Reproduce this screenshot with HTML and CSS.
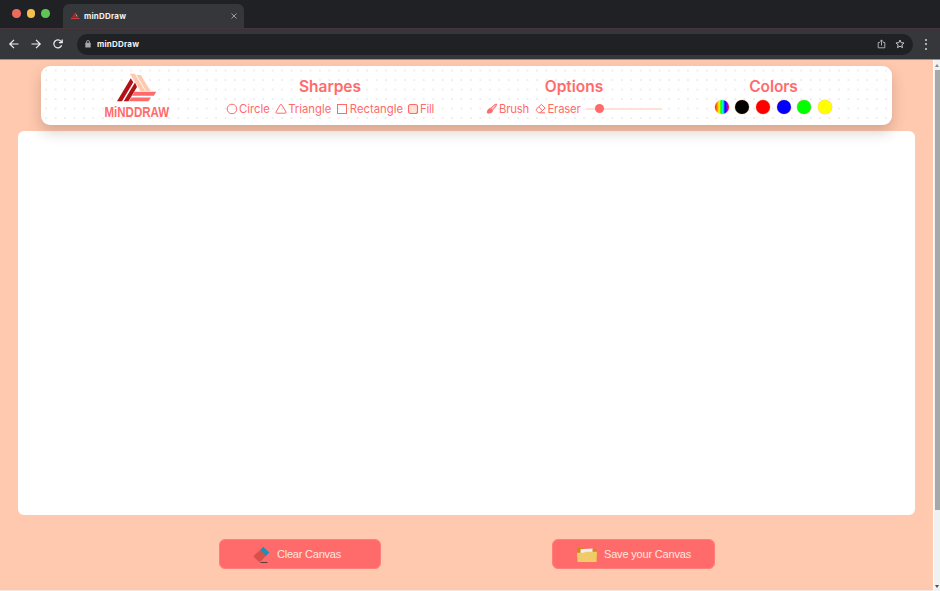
FILE: index.html
```html
<!DOCTYPE html>
<html lang="en">
<head>
<meta charset="utf-8">
<title>minDDraw</title>
<link rel="stylesheet" href="styles.css">
</head>
<body>
<div class="browser">
  <div class="tabs">
    <div class="lights"><i class="close"></i><i class="min"></i><i class="max"></i></div>
    <div class="tab">
      <svg class="favicon" viewBox="0 0 10 8"><path d="M1 5.500L4 1l1.500 4.500z" fill="#b5262b"/><path d="M4.500 0l3 4.500H6z" fill="#dba994"/><path d="M0 6h9.500v1.300H0z" fill="#c94545"/></svg>
      <span>minDDraw</span>
      <svg class="tab-x" viewBox="0 0 6 6"><path d="M.5.5l5 5M5.500.5l-5 5" stroke="#b4b5b7" stroke-width=".8"/></svg>
    </div>
  </div>
  <div class="toolbar">
    <svg class="nav" viewBox="0 0 10 10"><path d="M9.500 5H.8M5 .8L.8 5 5 9.200" /></svg>
    <svg class="nav" viewBox="0 0 10 10"><path d="M.5 5h8.700M5 .8L9.200 5 5 9.200" /></svg>
    <svg class="nav" viewBox="0 0 10 10"><path d="M8.600 6.300A4 4 0 1 1 8 2.400L9 3.500M9.200.4v3.300H5.900" /></svg>
    <div class="address">
      <svg class="lock" viewBox="0 0 6 8"><path d="M1.500 3.500V2a1.500 1.500 0 0 1 3 0v1.500" fill="none" stroke="#a5a6a9" stroke-width=".9"/><rect x=".3" y="2.800" width="5.400" height="4.700" rx=".5" fill="#a5a6a9"/></svg>
      <span>minDDraw</span>
      <svg class="share" viewBox="0 0 9 10"><path d="M2.800 3.500H1.200v5.300h6.600V3.500H6.200M4.500 6.500V1M2.800 2.700L4.500 1l1.700 1.700" fill="none" stroke="#b8b9bb" stroke-width=".9"/></svg>
      <svg class="star" viewBox="0 0 10 10"><path d="M5 1l1.150 2.700 2.900.25-2.200 1.900.65 2.850L5 7.200 2.500 8.700l.65-2.850-2.200-1.900 2.900-.25z" fill="none" stroke="#c5c6c8" stroke-width="1"/></svg>
    </div>
    <div class="dots"><i></i><i></i><i></i></div>
  </div>
</div>
<div class="viewport">
  <main class="page">
    <header class="panel">
      <svg class="logo" viewBox="0 0 66 48">
        <path d="M13 28.300L26.800 5.300l2.500 4L18 28.300z" fill="#b11216"/>
        <path d="M19.700 28.300L31 9.500l2 4.500-8.500 14.300z" fill="#b11216"/>
        <path d="M25.800.7h5L41.200 18h-4.600z" fill="#ffc9af"/>
        <path d="M32.500 2h4.300l9.700 16h-4.600z" fill="#ffc9af"/>
        <path d="M30.500 18.700H52.300l-2.500 4H28z" fill="#ff6b6b"/>
        <path d="M27.300 24.500h19.500l-2.300 3.800H25z" fill="#ff6b6b"/>
        <text x=".5" y="44.300" textLength="64.500" lengthAdjust="spacingAndGlyphs">MiNDDRAW</text>
      </svg>
      <section class="group shapes">
        <h2>Sharpes</h2>
        <div class="tools">
          <div class="tool circle"><svg viewBox="0 0 12 12"><circle cx="6" cy="6" r="4.800"/></svg><span>Circle</span></div>
          <div class="tool triangle"><svg viewBox="0 0 12 12"><path d="M5.200 1.800q.8-1.200 1.600 0l4.200 7.200q.5 1.200-.8 1.200H1.800Q.5 10.200 1 9z"/></svg><span>Triangle</span></div>
          <div class="tool rectangle"><svg viewBox="0 0 12 12"><rect x="1.500" y="1.500" width="9" height="9"/></svg><span>Rectangle</span></div>
          <div class="tool fill"><svg viewBox="0 0 12 12"><rect x="1.500" y="1.500" width="9" height="9" rx="2"/></svg><span>Fill</span></div>
        </div>
      </section>
      <section class="group options">
        <h2>Options</h2>
        <div class="tools">
          <div class="tool brush"><svg viewBox="0 0 12 12"><path class="solid" d="M10.500 1C8.500 1.500 6.500 3 4.700 5.200l1.800 1.700C8.700 5.400 10.400 3.300 10.500 1z" fill-opacity=".45"/><path class="solid" d="M4.500 5.700C2.200 5.500 1.500 7.200 1.300 10c2.900.4 5.100-.4 5.200-2.600z"/></svg><span>Brush</span></div>
          <div class="tool eraser"><svg viewBox="0 0 12 12"><path d="M1.300 6.200L6.400 1.300 10.100 5 5 9.800H3.500L1.300 7.600zM3.800 4l3.700 3.700M5 9.800h5"/></svg><span>Eraser</span></div>
          <div class="slider"><i></i></div>
        </div>
      </section>
      <section class="group colors">
        <h2>Colors</h2>
        <div class="swatches"><i class="rainbow"></i><i class="black"></i><i class="red"></i><i class="blue"></i><i class="green"></i><i class="yellow"></i></div>
      </section>
    </header>
    <div class="canvas"></div>
    <footer class="actions">
      <button class="action clear">
        <svg viewBox="0 0 18 18"><path d="M10.200.7l6 5.800-3.500 3.700-5.800-6z" fill="#1f8fb5"/><path d="M7.200 4.100l5.700 5.800-5.400 5.600q-1 .8-2 0L1.200 11.300q-.8-1 0-2z" fill="#d94f4a"/><path d="M7.500 16.500h7" stroke="#49343a" stroke-width=".9"/></svg>
        <span>Clear Canvas</span>
      </button>
      <button class="action save">
        <svg viewBox="0 0 22 16"><path d="M1 1h6l1 1h12.500v13H1z" fill="#cf8a12"/><path d="M4.500 2.300L16.500 1.500v8h-12z" fill="#edf0f2"/><path d="M1 5.800h7l1.500-1H21L20.500 15H1.500z" fill="#f0cb67"/></svg>
        <span>Save your Canvas</span>
      </button>
    </footer>
  </main>
  <div class="scrollbar"><i class="up"></i><i class="thumb"></i><i class="down"></i></div>
</div>
</body>
</html>
```

FILE: styles.css
```css
* { box-sizing: border-box; }
body { margin: 0; width: 940px; height: 591px; overflow: hidden; font-family: Inter, sans-serif; background: #ffc9af; }
svg { display: block; flex: none; overflow: visible; }
i { display: block; flex: none; }
.browser { height: 60px; color: #f1f1f2; font: bold 8px/12px Inter, sans-serif; letter-spacing: .2px; border-bottom: 1px solid #a88c88; background: #36373a; }
.tabs { height: 28px; background: #202124; display: flex; }
.lights { display: flex; gap: 6px; padding: 9px 0 0 12px; width: 63px; }
.lights i { width: 8.500px; height: 8.500px; border-radius: 50%; }
.close { background: #ed6a5e; }
.min { background: #f5bf4f; }
.max { background: #61c554; }
.tab { width: 181px; height: 24px; margin-top: 4px; background: #36373a; border-radius: 6px 6px 0 0; display: flex; align-items: center; padding: 0 7px 0 8px; }
.favicon { width: 9px; height: 8px; margin-right: 4px; }
.tab-x { width: 6px; height: 6px; margin-left: auto; }
.toolbar { height: 31px; border-top: 1px solid #4a343c; display: flex; align-items: center; padding-left: 9px; }
.nav { width: 10px; height: 10px; margin-right: 12px; fill: none; stroke: #f1f1f2; stroke-width: 1.200; }
.address { width: 836px; height: 21px; margin-left: 2px; border-radius: 11px; background: #202124; display: flex; align-items: center; padding: 0 8px; }
.lock { width: 6px; height: 8px; margin-right: 6px; }
.share { width: 9px; height: 10px; margin-left: auto; margin-right: 9px; }
.star { width: 10px; height: 10px; }
.dots { display: grid; gap: 2.500px; margin-left: 12px; }
.dots i { width: 2px; height: 2px; border-radius: 50%; background: #d6d6d8; }
.viewport { display: flex; height: 531px; }
.page { width: 933px; background: #ffc9af; padding-top: 6px; border-bottom: 1px solid #ffe5da; }
.panel { position: relative; z-index: 1; width: 851px; height: 59px; margin-left: 41px; border-radius: 9px; background: radial-gradient(circle, #ececef .65px, transparent 1px) .5px -.25px / 9.450px 9.530px #fff; box-shadow: 0 7px 14px rgba(70, 40, 30, .22); display: flex; color: #ff6b6b; }
.logo { width: 66px; height: 48px; margin: 7px 0 0 63px; }
.logo text { font: bold 15px "Liberation Sans", sans-serif; fill: #ff6b6b; }
h2 { margin: 0; font-size: 15.500px; line-height: 20px; font-weight: 600; text-align: center; }
.group { padding-top: 11px; }
.shapes { width: 208px; margin-left: 56px; }
.options { width: 176px; margin-left: 52px; }
.colors { width: 118px; margin-left: 52.500px; }
.colors h2 { letter-spacing: -.1px; }
.tools { display: flex; align-items: center; height: 15px; margin-top: 4px; font-size: 11.300px; line-height: 15px; }
.tool { display: flex; align-items: center; white-space: nowrap; }
.tool svg { width: 12px; height: 12px; fill: none; stroke: #ff6b6b; stroke-width: 1; }
.tool span { margin-left: 1px; position: relative; top: 1px; }
.circle { width: 49px; }
.triangle { width: 62px; }
.triangle span { margin-left: 1.500px; }
.rectangle { width: 71.500px; }
.rectangle span { margin-left: 1.500px; }
.fill { letter-spacing: -.2px; }
.fill span { margin-left: .5px; }
.fill rect { fill: #ffe1d5; stroke-width: 1.200; }
.brush { width: 48.500px; letter-spacing: -.2px; }
.eraser { width: 51.500px; letter-spacing: -.2px; }
.tool .solid { fill: #ff6b6b; }
.slider { width: 76px; height: 2px; background: #ffe1d8; display: flex; align-items: center; padding-left: 9px; }
.slider i { width: 9px; height: 9px; border-radius: 50%; background: #ff6b6b; }
.swatches { display: flex; gap: 6.600px; margin: 3px 0 0 .3px; }
.swatches i { width: 14px; height: 14px; border-radius: 50%; box-shadow: 0 0 0 .5px #ffc9af; }
.rainbow { background: linear-gradient(90deg, red 0%, orange 18%, yellow 30%, lime 43%, cyan 57%, blue 72%, #8500ff 84%, red 100%); }
.black { background: #000; }
.red { background: #f00; }
.blue { background: #00f; }
.green { background: #0f0; }
.yellow { background: #ff0; }
.canvas { width: 897px; height: 384px; margin: 6px 0 0 18px; background: #fff; border-radius: 6px; }
.actions { display: flex; gap: 171px; margin: 24px 0 0 218.500px; }
.action { width: 162.500px; height: 30px; border: 1px solid #ff7f78; border-radius: 6px; background: #ff6b6b; color: #ffe6df; font: 11px/15px "Liberation Sans", sans-serif; letter-spacing: -.22px; display: flex; align-items: center; white-space: nowrap; padding: 1px 0 0; }
.clear svg { width: 18px; height: 18px; margin: 0 6px 0 33.500px; }
.save svg { width: 22px; height: 16px; margin: 0 6px 0 23px; }
.save { letter-spacing: -.18px; }
.scrollbar { width: 7px; background: #f1f1f1; border-left: 1px solid #fff; display: flex; flex-direction: column; align-items: center; }
.up, .down { border: 2px solid transparent; width: 0; height: 0; }
.up { border-bottom: 3px solid #8a8a8a; margin-top: 2px; }
.down { border-top: 3px solid #505050; margin: auto 0 1px; }
.thumb { width: 5px; height: 440px; margin-top: 3px; background: #a8a8a8; }
```
